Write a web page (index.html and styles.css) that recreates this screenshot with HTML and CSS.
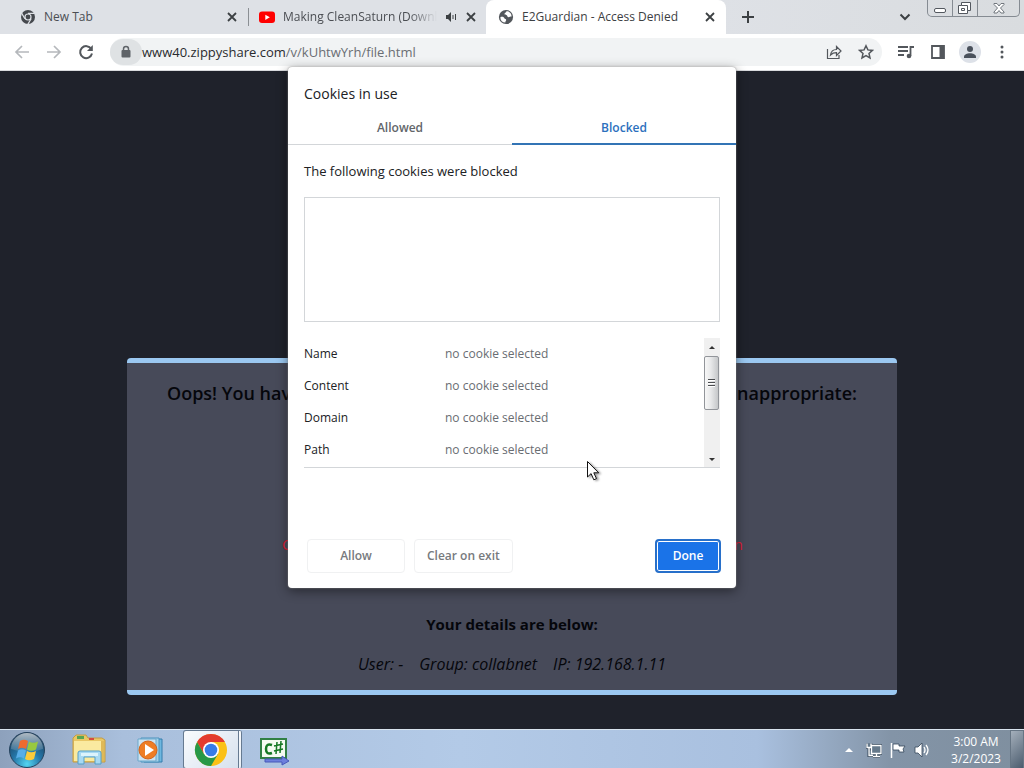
FILE: index.html
```html
<!DOCTYPE html>
<html lang="en">
<head>
<meta charset="utf-8">
<meta name="viewport" content="width=device-width, initial-scale=1">
<title>E2Guardian - Access Denied</title>
<link rel="stylesheet" href="styles.css">
</head>
<body>
<header class="tabstrip">
  <div class="tab tab-first">
    <svg class="i16" viewBox="0 0 16 16"><circle cx="8" cy="8" r="7" fill="#45484d"/><circle cx="8" cy="8" r="3.6" fill="#dee1e6"/><circle cx="8" cy="8" r="2.4" fill="#45484d"/><path d="M8 4.4h6.6M4.9 9.8 1.6 4.1M11.1 9.8 7.8 15.4" stroke="#dee1e6" stroke-width="1.2"/></svg>
    <span class="tab-title">New Tab</span>
    <button class="close" aria-label="Close New Tab"><svg viewBox="0 0 10 10"><path d="m1 1 8 8M9 1 1 9"/></svg></button>
  </div>
  <div class="tab tab-media">
    <svg class="i16" viewBox="0 0 16 16"><rect y="2.5" width="16" height="11.5" rx="3" fill="#f00"/><path d="m6.3 5.7 4.5 2.6-4.5 2.6z" fill="#fff"/></svg>
    <span class="tab-title faded">Making CleanSaturn (Download</span>
    <svg class="sound" viewBox="0 0 12 12"><path d="M1 4h2l3-3v10L3 8H1z" fill="#3c4043"/><path d="M8 4v4M10.5 3v6" stroke="#3c4043" fill="none"/></svg>
    <button class="close" aria-label="Close Making CleanSaturn"><svg viewBox="0 0 10 10"><path d="m1 1 8 8M9 1 1 9"/></svg></button>
  </div>
  <div class="tab tab-active">
    <svg class="i16" viewBox="0 0 16 16"><circle cx="8" cy="8" r="7.1" fill="#53575c"/><path d="M2.5 8c2-.7 3.700 0 3.900 1.200.2 1 1.800.6 1.800 1.700 0 .8-1 1.200-.8 2.700C4 13.400 2 11 2.500 8zM8.500 2.300c-.5 1.700-2 1.300-2 2.600 0 1 1.200 1 2.400 1.300.6.900.4 2 1.700 2 1 0 1.400-.7 3-.7C13.600 4.500 11.600 2.300 8.500 2.300z" fill="#fff"/></svg>
    <span class="tab-title">E2Guardian - Access Denied</span>
    <button class="close" aria-label="Close E2Guardian"><svg viewBox="0 0 10 10"><path d="m1 1 8 8M9 1 1 9"/></svg></button>
  </div>
  <button class="newtab" aria-label="New tab"><svg viewBox="0 0 12 12"><path d="M6 0v12M0 6h12" stroke="#3c4043" stroke-width="2"/></svg></button>
  <button class="tabsearch" aria-label="Search tabs"><svg viewBox="0 0 12 8"><path d="m1.500 1.500 4.500 4.500 4.500-4.500" fill="none" stroke="#3c4043" stroke-width="2"/></svg></button>
  <div class="winbtns">
    <button aria-label="Minimize"><svg viewBox="0 0 24 16"><rect x="6.500" y="8.500" width="11" height="4" rx="1.500" fill="#fff" stroke="#53585f"/></svg></button>
    <button aria-label="Restore"><svg viewBox="0 0 24 16"><path d="M8.500 2.500h9v8h-3v3h-9v-8h3z" fill="#fff" stroke="#53585f"/><path d="M8.500 5.500h6v5M8.500 8.500h3v2h-3z" fill="none" stroke="#53585f"/></svg></button>
    <button class="wclose" aria-label="Close window"><svg viewBox="0 0 24 16"><path d="M7 3.500h3l2 2.500 2-2.500h3v1L13.500 8l3.500 4v1h-3l-2-2.500-2 2.500H7v-1l3.500-4L7 4.500z" fill="#fff" stroke="#70767d"/></svg></button>
  </div>
</header>
<nav class="toolbar">
  <button class="tool" aria-label="Back"><svg viewBox="0 0 16 16"><path d="M15 8H2M8 2 2 8l6 6" stroke="#b5b8bc"/></svg></button>
  <button class="tool" aria-label="Forward"><svg viewBox="0 0 16 16"><path d="M1 8h13M8 2l6 6-6 6" stroke="#b5b8bc"/></svg></button>
  <button class="tool" aria-label="Reload"><svg viewBox="0 0 16 16"><path d="M13.300 5A6 6 0 1 0 14 9.500" stroke-width="2"/><path d="M14.800 1v6H9z" fill="#53575c" stroke="none"/></svg></button>
  <div class="omnibox">
    <button class="lock" aria-label="View site information"><svg viewBox="0 0 12 14"><path d="M3.500 6V4a2.500 2.500 0 0 1 5 0v2" fill="none" stroke="#5f6368" stroke-width="1.500"/><rect x="1.500" y="5" width="9" height="7.500" rx="1" fill="#5f6368"/></svg></button>
    <a class="url" href="#">www40.zippyshare.com<span>/v/kUhtwYrh/file.html</span></a>
    <button class="tool" aria-label="Share"><svg viewBox="0 0 16 16"><path d="M1.500 5v9.500H13V11M4.500 11C5 7.500 7 5.500 10.500 5.500v-3L15 7l-4.500 4.500V8.700C8 8.700 6 9.500 4.500 11z" stroke-width="1.200"/></svg></button>
    <button class="tool" aria-label="Bookmark"><svg viewBox="0 0 16 16"><path d="m8 1.800 1.900 4.100 4.500.5-3.400 3 1 4.500L8 11.600l-4 2.300 1-4.500-3.400-3 4.500-.5z" stroke-width="1.500"/></svg></button>
  </div>
  <div class="actions">
    <button class="tool" aria-label="Media controls"><svg viewBox="0 0 16 16"><path d="M0 3h10M0 7h10M0 11h6M12.500 12V3H16" stroke-width="1.800"/><circle cx="11" cy="12" r="2.300" fill="#53575c" stroke="none"/></svg></button>
    <button class="tool" aria-label="Side panel"><svg viewBox="0 0 16 16"><path d="M2 2h12v12H2z" stroke-width="1.800"/><path d="M9.500 2H14v12H9.500z" fill="#53575c" stroke="none"/></svg></button>
    <button class="tool avatar" aria-label="Profile"><svg viewBox="0 0 16 16"><g fill="#4a515c" stroke="none"><circle cx="8" cy="5" r="3"/><path d="M2 13c0-5 12-5 12 0v1H2z"/></g></svg></button>
    <button class="tool" aria-label="Menu"><svg viewBox="0 0 16 16"><g fill="#53575c" stroke="none"><circle cx="8" cy="3" r="1.500"/><circle cx="8" cy="8" r="1.500"/><circle cx="8" cy="13" r="1.500"/></g></svg></button>
  </div>
</nav>
<main class="page">
  <section class="notice">
    <h1 class="headline"><span>Oops! You have</span><span>inappropriate:</span></h1>
    <p class="reason"><span>C</span><span>n</span></p>
    <h2 class="subhead">Your details are below:</h2>
    <p class="details"><span>User: -</span><span>Group: collabnet</span><span>IP: 192.168.1.11</span></p>
  </section>
</main>
<section class="dialog" role="dialog" aria-labelledby="dialog-title">
  <h2 class="dialog-title" id="dialog-title">Cookies in use</h2>
  <div class="dtabs" role="tablist">
    <button class="dtab" role="tab" aria-selected="false">Allowed</button>
    <button class="dtab selected" role="tab" aria-selected="true">Blocked</button>
  </div>
  <div class="dbody">
    <p class="lead">The following cookies were blocked</p>
    <div class="cookies"></div>
    <div class="info">
      <table>
        <tr><th scope="row">Name</th><td>no cookie selected</td></tr>
        <tr><th scope="row">Content</th><td>no cookie selected</td></tr>
        <tr><th scope="row">Domain</th><td>no cookie selected</td></tr>
        <tr><th scope="row">Path</th><td>no cookie selected</td></tr>
      </table>
      <div class="scrollbar">
        <svg class="arrow" viewBox="0 0 16 18"><path d="m5 11 3-3 3 3z" fill="#333"/></svg>
        <div class="thumb"><i></i><i></i><i></i></div>
        <svg class="arrow" viewBox="0 0 16 18"><path d="m5 9 3 3 3-3z" fill="#333"/></svg>
      </div>
    </div>
    <div class="buttons">
      <button class="btn" disabled>Allow</button>
      <button class="btn" disabled>Clear on exit</button>
      <button class="btn done">Done</button>
    </div>
  </div>
  <svg class="cursor" viewBox="0 0 12 20"><path d="M.5.500v15.500l3.600-3.400 2.700 6.200 2.700-1.200-2.700-5.800h4.900z" fill="#fff" stroke="#111"/></svg>
</section>
<footer class="taskbar">
  <button class="start" aria-label="Start"><svg viewBox="0 0 38 38"><defs><radialGradient id="orb" cx=".5" cy=".9" r=".9"><stop offset="0" stop-color="#54d5f1"/><stop offset=".45" stop-color="#2476a8"/><stop offset="1" stop-color="#1c3953"/></radialGradient><linearGradient id="gloss" x2="0" y2="1"><stop stop-color="#fff" stop-opacity=".65"/><stop offset="1" stop-color="#fff" stop-opacity=".08"/></linearGradient></defs><circle cx="19" cy="19" r="17.500" fill="url(#orb)" stroke="#26435e"/><path d="M3 18A16 16 0 0 1 35 18Q19 24 3 18z" fill="url(#gloss)"/><path d="M12 10q4-2.500 8 0l-2 8q-4-2.500-8 0z" fill="#ee6b2f"/><path d="M21 10.500q4 2.500 9 0l-2 8q-5 2.500-9 0z" fill="#98c93f"/><path d="M10 19.500q4-2.500 8 0l-2 8q-4-2.500-8 0z" fill="#58aee8"/><path d="M19 20q4 2.500 9 0l-2 8q-5 2.500-9 0z" fill="#fccb3b"/></svg></button>
  <button class="app" aria-label="Explorer"><svg viewBox="0 0 34 32"><path d="M1 4 4 1h10l2 3h14l3 2v22H1z" fill="#e9c765" stroke="#c49c43"/><path d="M5 2h7v3H5z" fill="#58a552"/><path d="M17 4h5v2h-5z" fill="#d74b3e"/><path d="M2 7h27v20H2z" fill="#faeaa0"/><path d="M29 7h3v20h-3z" fill="#dfb957"/><path d="M6 30V19q0-2 2-2h19q2 0 2 2v11h-6v-7H12v7z" fill="#a8d9f2" stroke="#559fc8"/><path d="M9 19h17v3H9z" fill="#dcf3fc"/></svg></button>
  <button class="app" aria-label="Media Player"><svg viewBox="0 0 34 32"><path d="M10 5h18v23H10z" fill="#6eb7df" stroke="#357dac"/><path d="M7 4h18v24H7z" fill="#a2d1e9" stroke="#4c93bd"/><path d="M4 5h18v22H4z" fill="#cde4f2" stroke="#6ba7cb"/><circle cx="14" cy="16" r="9" fill="#ee7d24" stroke="#d4641a"/><path d="m11 10 9 6-9 6z" fill="#fff"/></svg></button>
  <button class="app running" aria-label="Chrome"><svg viewBox="0 0 34 34"><circle cx="17" cy="17" r="16" fill="#fbc116"/><path d="M3.100 9A16 16 0 0 1 30.900 9H17l-7 12z" fill="#e33b2e"/><path d="M3.100 9A16 16 0 0 0 17 33l7-12H10z" fill="#279847"/><circle cx="17" cy="17" r="8" fill="#fff"/><circle cx="17" cy="17" r="6.300" fill="#377ce8"/></svg></button>
  <button class="app" aria-label="C# script"><svg viewBox="0 0 34 32"><path d="M4 5h25v19H4z" fill="#f4fbf1" stroke="#318044" stroke-width="2"/><path d="M15 11q-6-2-6 4t6 4" fill="none" stroke="#167924" stroke-width="2.500"/><path d="M20 8l-1 12M24 7l-1 12M17 12l9-2M17 17l9-2" stroke="#167924" stroke-width="1.500"/><path d="M8 25h17v-3l7 5-7 4v-3H8z" fill="#6d7fdd" stroke="#4658b8"/></svg></button>
  <div class="tray">
    <svg class="tray-up" viewBox="0 0 10 6"><path d="m1 5 4-4 4 4z" fill="#fff"/></svg>
    <svg viewBox="0 0 16 16"><path d="M5.500 3.500H15v8H5.500zM7 14.500h7M10.500 12v2M1 1.500v4h4v-4M3 5.500v8h4" fill="none" stroke="#35475a" stroke-width="3"/><path d="M5.500 3.500H15v8H5.500zM7 14.500h7M10.500 12v2M1 1.500v4h4v-4M3 5.500v8h4" fill="#64788a" stroke="#fff" stroke-width="1.300"/></svg>
    <svg viewBox="0 0 16 16"><path d="M1.500 1v15M3 2h6v2h6l-2 3 1 3H9V8H3z" fill="#fff" stroke="#35475a" stroke-width=".8"/><path d="M1.500 1v15" stroke="#fff" stroke-width="1.500"/></svg>
    <svg viewBox="0 0 16 16"><path d="M1 5h3l4-4v14l-4-4H1z" fill="#fff" stroke="#35475a" stroke-width=".8"/><path d="M10 5q2 3 0 6M12 3q4 5 0 10" fill="none" stroke="#fff" stroke-width="1.300"/></svg>
    <div class="clock"><time>3:00 AM</time><time>3/2/2023</time></div>
  </div>
  <button class="peek" aria-label="Show desktop"></button>
</footer>
</body>
</html>
```
FILE: styles.css
```css
* { box-sizing: border-box; }
body { margin: 0; min-height: 100vh; display: flex; flex-direction: column; position: relative; overflow-x: hidden; background: #1f222b; font: 12px/16px "Open Sans", "Noto Sans", sans-serif; color: #202124; }
button { margin: 0; padding: 0; border: 0; background: none; font: inherit; color: inherit; }
svg { display: block; flex: none; }
h1, h2, p { margin: 0; }
.tabstrip { height: 34px; flex: none; display: flex; align-items: stretch; background: linear-gradient(90deg, #dee1e6 70%, #d9dcdf); }
.tab { min-width: 0; display: flex; align-items: center; gap: 8px; color: #4b4e53; }
.tab-first { flex: 0 1 248px; padding: 0 10px 0 20px; }
.tab-media { flex: 0 1 238px; padding: 0 9px 0 11px; position: relative; }
.tab-media::before { content: ""; width: 1px; height: 18px; background: #8b8f94; position: absolute; left: 0; top: 8px; }
.tab-active { flex: 0 1 240px; padding: 0 10px 0 12px; background: #fff; border-radius: 8px 8px 0 0; color: #3c4043; }
.tab-title { flex: 1; min-width: 0; white-space: nowrap; overflow: hidden; }
.faded { mask-image: linear-gradient(90deg, #000 82%, transparent); }
.i16 { width: 16px; height: 16px; }
.sound { width: 12px; height: 12px; }
.close { width: 12px; height: 12px; display: grid; place-items: center; }
.close svg { width: 10px; height: 10px; stroke: #3c4043; stroke-width: 1.800; }
.newtab { width: 44px; display: grid; place-items: center; }
.newtab svg { width: 12px; height: 12px; }
.tabsearch { margin-left: auto; width: 44px; display: grid; place-items: center; }
.tabsearch svg { width: 12px; height: 8px; }
.winbtns { display: flex; height: 17px; margin-right: 4px; border: 1px solid #858b92; border-top: 0; border-radius: 0 0 5px 5px; }
.winbtns button { width: 25px; display: grid; place-items: center; border-right: 1px solid #858b92; }
.winbtns .wclose { width: 41px; border: 0; }
.winbtns svg { width: 24px; height: 16px; }
.toolbar { height: 37px; flex: none; display: flex; align-items: center; gap: 16px; padding: 0 14px; background: #fff; border-bottom: 1px solid #d8dadd; }
.tool svg { width: 16px; height: 16px; fill: none; stroke: #53575c; stroke-width: 1.700; }
.omnibox { flex: 1; height: 28px; display: flex; align-items: center; gap: 16px; padding-right: 8px; border-radius: 14px; background: #f1f3f4; }
.lock { width: 32px; height: 26px; border-radius: 13px; background: #dfe2e4; display: grid; place-items: center; }
.lock svg { width: 12px; height: 14px; }
.url { flex: 1; margin-left: -16px; font-size: 13px; color: #292b2f; text-decoration: none; }
.url span { color: #6a6e73; }
.actions { display: flex; gap: 16px; }
.avatar { width: 22px; height: 22px; margin: -3px; border-radius: 50%; background: #dde1e8; display: grid; place-items: center; }
.page { flex: 1; padding: 287px 16px 34px; }
.notice { max-width: 770px; margin: 0 auto; padding: 16px 40px 14px; border: solid #9bc8f1; border-width: 5px 0; border-radius: 4px; background: #474a59; color: #05060b; text-align: center; }
.headline { display: flex; justify-content: space-between; font-size: 18px; line-height: 28px; font-weight: 600; }
.reason { display: flex; justify-content: space-between; margin: 125px 114px 0 115px; color: #df1b34; font-size: 15px; line-height: 24px; }
.subhead { margin-top: 56px; font-size: 15px; line-height: 24px; font-weight: 700; }
.details { display: flex; justify-content: center; gap: 16px; margin-top: 16px; font-size: 16px; line-height: 24px; font-style: italic; }
.dialog { position: absolute; top: 67px; left: 50%; transform: translateX(-50%); width: 448px; max-width: 100%; padding-top: 17px; border-radius: 4px; background: #fff; box-shadow: 0 0 2px #888, 0 3px 12px #0007; }
.dialog-title { padding: 0 16px; font-size: 14px; line-height: 20px; font-weight: 400; }
.dtabs { display: flex; margin-top: 8px; }
.dtab { flex: 1; height: 33px; border-bottom: 1px solid #d3d6d9; color: #62666a; font-weight: 600; }
.dtab.selected { padding-top: 1px; border-bottom: 2px solid #3274b5; color: #2c70bd; }
.dbody { padding: 16px 15px 15px 16px; }
.lead { font-size: 13px; line-height: 20px; }
.cookies { height: 125px; margin: 16px 1px 0 0; border: 1px solid #d3d6d9; }
.info { display: flex; height: 130px; margin: 16px 1px 0 0; border-bottom: 1px solid #d3d6d9; overflow: hidden; }
.info table { flex: 1; align-self: flex-start; border-collapse: collapse; }
.info th, .info td { height: 32px; padding: 0; font-weight: 400; text-align: left; }
.info th { width: 141px; }
.info td { color: #696d72; }
.scrollbar { width: 16px; display: flex; flex-direction: column; background: #f0f0f0; }
.arrow { width: 16px; height: 18px; }
.thumb { width: 15px; height: 54px; margin-bottom: auto; display: flex; flex-direction: column; align-items: center; justify-content: center; gap: 1px; border: 1px solid #92959a; border-radius: 2px; background: linear-gradient(90deg, #f7f7f7, #e7e8e9 45%, #c5c7c9); }
.thumb i { width: 7px; height: 2px; border-top: 1px solid #4b4d50; background: #fff; }
.buttons { display: flex; gap: 9px; margin-top: 71px; padding-left: 3px; }
.btn { min-width: 98px; height: 34px; padding: 0 12px; border: 1px solid #f0f1f2; border-radius: 4px; color: #777a7e; font-weight: 600; }
.btn.done { min-width: 66px; margin-left: auto; border: 2px solid #2870ca; background: #1a73e8; box-shadow: inset 0 0 0 1px #fff; color: #fff; }
.cursor { position: absolute; left: 299px; top: 394px; width: 12px; height: 20px; filter: drop-shadow(2px 1px 1px #0006); }
.taskbar { height: 40px; flex: none; display: flex; align-items: center; border-top: 1px solid #d9e4ee; background: linear-gradient(90deg, #8da1bc, #a9bfdc 12%, #b3cae7 45%, #a9c0df 74%, #8394a7 87%, #7f8f9f); }
.start { width: 58px; padding-left: 8px; }
.start svg { width: 38px; height: 38px; }
.app { width: 62px; height: 39px; display: grid; place-items: center; }
.app svg { width: 34px; height: 32px; }
.running { width: 59px; margin: 0 1px; border: 1px solid #667a91; border-right: 4px double #667a91; border-radius: 3px; background: linear-gradient(135deg, #f9fbfd, #d6e1ee); }
.running svg { width: 34px; height: 34px; }
.tray { margin-left: auto; display: flex; align-items: center; gap: 8px; }
.tray svg { width: 16px; height: 16px; }
.tray .tray-up { width: 10px; height: 6px; margin-right: 4px; }
.clock { width: 68px; display: flex; flex-direction: column; align-items: center; margin-left: 4px; color: #fff; line-height: 17px; }
.peek { width: 14px; height: 39px; border: 1px solid #667584; background: linear-gradient(135deg, #a4afbb, #4b5c6e); }
```
